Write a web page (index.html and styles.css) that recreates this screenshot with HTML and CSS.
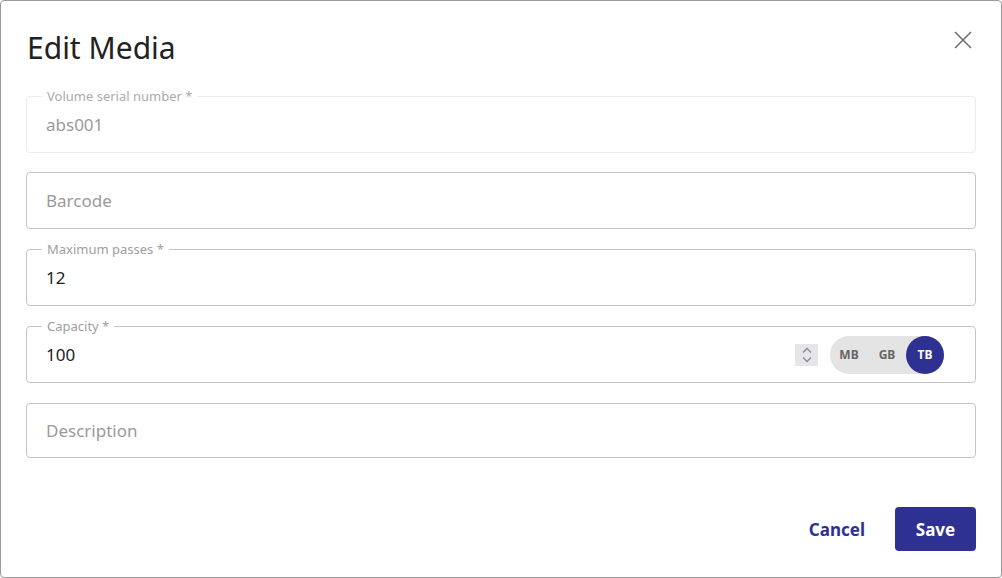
FILE: index.html
```html
<!DOCTYPE html>
<html lang="en">
<head>
<meta charset="utf-8">
<title>Edit Media</title>
<link rel="stylesheet" href="styles.css">
</head>
<body>
<div class="dialog">
  <header class="dialog-head">
    <h1 class="title">Edit Media</h1>
    <button class="close" aria-label="Close">
      <svg width="18" height="18" viewBox="0 0 18 18"><path d="M1 1L17 17M17 1L1 17" stroke="#6b6b6b" stroke-width="1.5" fill="none"/></svg>
    </button>
  </header>
  <div class="fields">
    <div class="field disabled">
      <span class="label">Volume serial number *</span>
      <div class="value">abs001</div>
    </div>
    <div class="field">
      <div class="value placeholder">Barcode</div>
    </div>
    <div class="field">
      <span class="label">Maximum passes *</span>
      <div class="value">12</div>
    </div>
    <div class="field">
      <span class="label">Capacity *</span>
      <div class="value">100</div>
      <div class="spinner">
        <svg width="12" height="18" viewBox="0 0 12 18"><path d="M2 6.5L6 2.5L10 6.5M2 11.5L6 15.5L10 11.5" stroke="#8c8c8c" stroke-width="1.4" fill="none"/></svg>
      </div>
      <div class="units">
        <span class="unit">MB</span>
        <span class="unit">GB</span>
        <span class="unit active">TB</span>
      </div>
    </div>
    <div class="field short">
      <div class="value placeholder">Description</div>
    </div>
  </div>
  <footer class="actions">
    <button class="btn text">Cancel</button>
    <button class="btn primary">Save</button>
  </footer>
</div>
</body>
</html>
```
FILE: styles.css
```css
* { box-sizing: border-box; }
html, body { margin: 0; padding: 0; }
body {
  font-family: "Noto Sans", "Open Sans", sans-serif;
  color: #222;
  background: #fff;
}
.dialog {
  width: 1002px;
  height: 578px;
  border: 1px solid #9a9a9a;
  border-radius: 4px;
  padding: 0 25px;
  display: flex;
  flex-direction: column;
}
.dialog-head {
  display: flex;
  justify-content: space-between;
  align-items: flex-start;
  height: 95px;
}
.title {
  margin: 27px 0 0 1px;
  font-size: 30px;
  font-weight: 400;
  line-height: 40px;
  color: #222;
}
.close {
  border: 0;
  background: none;
  padding: 0;
  margin: 30px 4px 0 0;
  width: 18px;
  height: 18px;
  display: flex;
}
.fields {
  display: flex;
  flex-direction: column;
  gap: 20px;
}
.field {
  position: relative;
  border: 1px solid #c4c4c4;
  border-radius: 4px;
  height: 57px;
  padding: 0 19px;
  display: flex;
  align-items: center;
}
.field.short { height: 55px; }
.label {
  position: absolute;
  left: 15px;
  top: -10px;
  padding: 0 5px;
  background: #fff;
  font-size: 13px;
  line-height: 18px;
  color: #9e9e9e;
}
.field.disabled { border-color: #ececec; margin-bottom: -1px; }
.field.disabled .value { color: #9a9a9a; }
.field.disabled .label { color: #ababab; }
.value {
  flex: 1;
  font-size: 17px;
  line-height: 22px;
  color: #222;
}
.value.placeholder { color: #9a9a9a; }
.spinner {
  width: 23px;
  height: 22px;
  background: #e6e6ea;
  display: flex;
  align-items: center;
  justify-content: center;
  margin-right: 12px;
}
.units {
  display: flex;
  align-items: center;
  background: #e4e4e4;
  border-radius: 19px;
  height: 38px;
  margin-right: 12px;
}
.unit {
  width: 38px;
  height: 38px;
  border-radius: 50%;
  display: flex;
  align-items: center;
  justify-content: center;
  font-size: 12px;
  font-weight: 700;
  color: #666;
}
.unit.active {
  background: #2e3192;
  color: #fff;
}
.actions {
  margin-top: auto;
  margin-bottom: 26px;
  display: flex;
  justify-content: flex-end;
  align-items: center;
  gap: 22px;
}
.btn {
  font-family: inherit;
  font-size: 17px;
  font-weight: 700;
  border: 0;
  border-radius: 4px;
  height: 44px;
  cursor: pointer;
}
.btn.text {
  background: none;
  color: #2e3192;
  padding: 0 8px;
}
.btn.primary {
  background: #2e3192;
  color: #fff;
  width: 81px;
}
```
